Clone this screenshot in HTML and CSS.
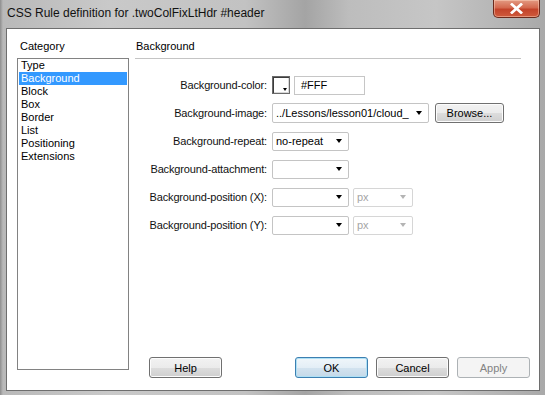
FILE: index.html
```html
<!DOCTYPE html>
<html lang="en">
<head>
  <meta charset="UTF-8" />
  <title>CSS Rule definition</title>
  <link rel="stylesheet" href="styles.css">
</head>
<body>
  <div class="window">
    <div class="titlebar">
      <span class="title">CSS Rule definition for .twoColFixLtHdr #header</span>
      <div class="close">
        <svg width="13" height="11" viewBox="0 0 13 11">
          <path d="M2 1.5 L11 9.5 M11 1.5 L2 9.5" stroke="#fff" stroke-width="2.8" stroke-linecap="square"/>
        </svg>
      </div>
    </div>

    <div class="dialog">
      <!-- category list -->
      <div class="category">
        <div class="group-label">Category</div>
        <div class="listbox">
          <div class="item">Type</div>
          <div class="item selected">Background</div>
          <div class="item">Block</div>
          <div class="item">Box</div>
          <div class="item">Border</div>
          <div class="item">List</div>
          <div class="item">Positioning</div>
          <div class="item">Extensions</div>
        </div>
      </div>

      <!-- background panel -->
      <div class="panel">
        <div class="panel-head">Background</div>
        <div class="form">
          <label>Background-color:</label>
          <div class="field">
            <div class="swatch"><span class="swatch-arrow"></span></div>
            <div class="textbox">#FFF</div>
          </div>

          <label>Background-image:</label>
          <div class="field">
            <div class="select wide"><span>../Lessons/lesson01/cloud_</span><i class="arrow"></i></div>
            <button class="btn browse">Browse...</button>
          </div>

          <label>Background-repeat:</label>
          <div class="field">
            <div class="select"><span>no-repeat</span><i class="arrow"></i></div>
          </div>

          <label>Background-attachment:</label>
          <div class="field">
            <div class="select"><span></span><i class="arrow"></i></div>
          </div>

          <label>Background-position (X):</label>
          <div class="field">
            <div class="select"><span></span><i class="arrow"></i></div>
            <div class="select unit disabled"><span>px</span><i class="arrow"></i></div>
          </div>

          <label>Background-position (Y):</label>
          <div class="field">
            <div class="select"><span></span><i class="arrow"></i></div>
            <div class="select unit disabled"><span>px</span><i class="arrow"></i></div>
          </div>
        </div>

        <div class="buttons">
          <button class="btn help">Help</button>
          <button class="btn ok">OK</button>
          <button class="btn">Cancel</button>
          <button class="btn" disabled>Apply</button>
        </div>
      </div>
    </div>
  </div>
</body>
</html>
```

FILE: styles.css
```css
body {
  margin: 0;
  padding: 0;
  background: #b4b4b4;
}
.window {
  width: 545px;
  height: 395px;
  display: flex;
  flex-direction: column;
  background: linear-gradient(90deg, #8e8e8e 0, #b9b9b9 3px, #c9c9c9 20%, #c2c2c2 45%, #a4a4a4 56%, #bdbdbd 64%, #c6c6c6 80%, #a9a9a9 100%);
  font-family: "Liberation Sans", Arial, sans-serif;
  font-size: 11px;
  color: #000;
}
.titlebar {
  height: 28px;
  flex: none;
  display: flex;
  justify-content: space-between;
  align-items: flex-start;
  padding: 0 5px 0 7px;
}
.title {
  font-size: 12px;
  line-height: 14px;
  margin-top: 6px;
  color: #111;
}
.close {
  width: 45px;
  height: 17px;
  border: 1px solid #6b2a1c;
  border-top: none;
  border-radius: 0 0 5px 5px;
  background: linear-gradient(#e39a82, #d4694f 45%, #c3432a 55%, #cf5a3c);
  display: flex;
  align-items: center;
  justify-content: center;
  box-shadow: inset 0 0 0 1px rgba(255, 220, 200, 0.45);
}
.dialog {
  flex: none;
  height: 340px;
  margin: 0 5px 5px 6px;
  background: #fff;
  border: 1px solid #6e6e6e;
  display: flex;
  padding: 11px 9px 10px 10px;
  gap: 6px;
}
.category {
  width: 112px;
  flex: none;
}
.group-label {
  line-height: 13px;
  margin-left: 3px;
  margin-bottom: 5px;
}
.listbox {
  height: 310px;
  border: 1px solid #828282;
  padding: 0 1px;
}
.item {
  line-height: 13px;
  padding-left: 2px;
}
.item.selected {
  background: #3399ff;
  color: #fff;
}
.panel {
  flex: 1;
  display: flex;
  flex-direction: column;
}
.panel-head {
  line-height: 13px;
  padding: 0 0 5px 1px;
  border-bottom: 1px solid #c4c4c4;
  margin-right: 9px;
}
.form {
  display: grid;
  grid-template-columns: 132px auto;
  grid-auto-rows: 28px;
  column-gap: 5px;
  align-items: center;
  margin-top: 12px;
}
.form label {
  text-align: right;
  letter-spacing: -0.15px;
  color: #111;
}
.field {
  display: flex;
  align-items: center;
}
.swatch {
  width: 16px;
  height: 16px;
  border: 1px solid #6a6a6a;
  position: relative;
  box-shadow: inset 1px 1px 0 #3c3c3c, inset -1px -1px 0 #d8d8d8;
  background: #fff;
}
.swatch-arrow {
  position: absolute;
  right: 2px;
  bottom: 2px;
  border-left: 2px solid transparent;
  border-right: 2px solid transparent;
  border-top: 3px solid #000;
}
.textbox {
  width: 63px;
  height: 17px;
  margin-left: 4px;
  border: 1px solid #c6c6c6;
  padding-left: 6px;
  line-height: 17px;
}
.select {
  width: 72px;
  height: 17px;
  border: 1px solid #c4c4c4;
  border-radius: 2px;
  display: flex;
  align-items: center;
  justify-content: space-between;
  padding: 0 0 0 3px;
}
.select span {
  white-space: nowrap;
}
.select.wide {
  width: 152px;
  height: 18px;
}
.arrow {
  margin-right: 6px;
  border-left: 3.5px solid transparent;
  border-right: 3.5px solid transparent;
  border-top: 4px solid #000;
}
.select.unit {
  width: 55px;
  margin-left: 4px;
}
.select.disabled {
  border-color: #d6d6d6;
  color: #a5a5a5;
}
.select.disabled .arrow {
  border-top-color: #b4b4b4;
}
.btn {
  font-family: "Liberation Sans", Arial, sans-serif;
  font-size: 11px;
  color: #000;
  width: 73px;
  height: 21px;
  padding: 0;
  border: 1px solid #707070;
  border-radius: 3px;
  background: linear-gradient(#f2f2f2, #ebebeb 50%, #dddddd 50%, #cfcfcf);
  box-shadow: inset 0 0 0 1px #fcfcfc;
}
.btn.browse {
  width: 69px;
  height: 20px;
  margin-left: 6px;
}
.btn.ok {
  border-color: #3c7fb1;
  background: linear-gradient(#f0f6fa, #e3eef6 50%, #d3e3ef 50%, #c4d9e9);
  box-shadow: inset 0 0 0 1px #aee0f5;
  margin-left: auto;
}
.btn:disabled {
  border-color: #adb2b5;
  background: #f4f4f4;
  color: #838383;
  box-shadow: none;
}
.btn.help {
  margin-left: 14px;
}
.buttons {
  margin-top: auto;
  margin-bottom: 2px;
  display: flex;
  gap: 8px;
}
```
